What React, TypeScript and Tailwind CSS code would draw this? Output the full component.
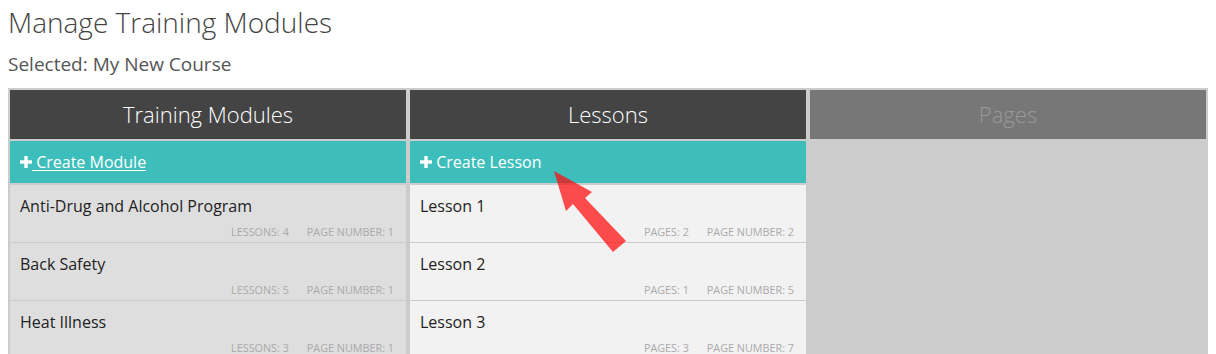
import React from 'react';

type Row = { title: string; count: string; page: number };

const modules: Row[] = [
  { title: 'Anti-Drug and Alcohol Program', count: 'Lessons: 4', page: 1 },
  { title: 'Back Safety', count: 'Lessons: 5', page: 1 },
  { title: 'Heat Illness', count: 'Lessons: 3', page: 1 },
];

const lessons: Row[] = [
  { title: 'Lesson 1', count: 'Pages: 2', page: 2 },
  { title: 'Lesson 2', count: 'Pages: 1', page: 5 },
  { title: 'Lesson 3', count: 'Pages: 3', page: 7 },
];

const PlusIcon = () => (
  <svg width="12" height="12" viewBox="0 0 12 12" className="shrink-0">
    <rect x="4.3" y="0" width="3.4" height="12" fill="white" />
    <rect x="0" y="4.3" width="12" height="3.4" fill="white" />
  </svg>
);

const Header: React.FC<{ label: string; muted?: boolean }> = ({ label, muted }) => (
  <div
    className={
      'flex h-[49px] items-center justify-center text-[22px] font-light ' +
      (muted ? 'bg-[#777777] text-[#999999]' : 'bg-[#444444] text-white')
    }
  >
    {label}
  </div>
);

const CreateBar: React.FC<{ label: string; underline?: boolean }> = ({ label, underline }) => (
  <div className="flex h-[42px] items-center bg-[#3ebebb] pl-[10px] text-[16px] text-white">
    <PlusIcon />
    <span className={'whitespace-pre ' + (underline ? 'underline underline-offset-2' : '')}>
      {' ' + label}
    </span>
  </div>
);

const List: React.FC<{ rows: Row[]; bg: string }> = ({ rows, bg }) => (
  <div className={bg}>
    {rows.map((r) => (
      <div
        key={r.title}
        className="flex h-[58px] flex-col justify-between border-b border-[#cccccc] px-[10px] pt-[9px] pb-[2px]"
      >
        <p className="text-[16px] leading-[24px] text-[#222222]">{r.title}</p>
        <div className="flex justify-end gap-[18px] pr-[2px] text-[10.8px] uppercase leading-[16px] text-[#aaaaaa]">
          <span>{r.count}</span>
          <span>Page Number: {r.page}</span>
        </div>
      </div>
    ))}
  </div>
);

export default function App() {
  return (
    <div className="relative h-[354px] overflow-hidden bg-white px-[8px] font-['Open_Sans',sans-serif]">
      <h1 className="h-[44px] text-[28px] font-light leading-[44px] text-[#444444]">
        Manage Training Modules
      </h1>
      <p className="mt-[8px] text-[19px] leading-[24px] text-[#555555]">Selected: My New Course</p>

      <div className="mt-[12px] grid w-[1200px] grid-cols-3 gap-x-[4px] bg-[#cccccc] p-[2px] pb-0">
        <div className="flex flex-col gap-[2px]">
          <Header label="Training Modules" />
          <CreateBar label="Create Module" underline />
          <List rows={modules} bg="bg-[#dedede]" />
        </div>
        <div className="flex flex-col gap-[2px]">
          <Header label="Lessons" />
          <CreateBar label="Create Lesson" />
          <List rows={lessons} bg="bg-[#f2f2f2]" />
        </div>
        <div className="flex flex-col gap-[2px]">
          <Header label="Pages" muted />
        </div>
      </div>

      <svg
        className="pointer-events-none absolute left-0 top-0"
        width="1216"
        height="354"
        viewBox="0 0 1216 354"
      >
        <polygon
          points="554,171 592,192 585,198 626,241 613,252 573,204 566,211"
          fill="#ff0a0a"
          fillOpacity="0.72"
        />
      </svg>
    </div>
  );
}
